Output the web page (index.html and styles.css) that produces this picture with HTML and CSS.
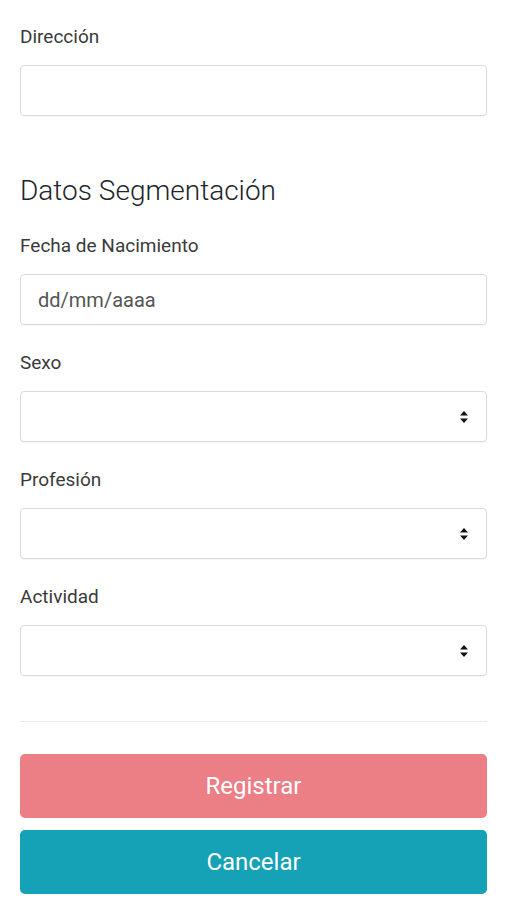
FILE: index.html
```html
<!DOCTYPE html>
<html lang="es">
<head>
<meta charset="utf-8">
<title>Registro</title>
<meta name="viewport" content="width=device-width, initial-scale=1.0">
<link rel="stylesheet" href="styles.css">
</head>
<body>

<form class="form">
  <div class="group first">
    <label for="direccion">Dirección</label>
    <input id="direccion" type="text" class="control">
  </div>

  <h2 class="section-title">Datos Segmentación</h2>

  <div class="group">
    <label for="nacimiento">Fecha de Nacimiento</label>
    <input id="nacimiento" type="text" class="control" placeholder="dd/mm/aaaa">
  </div>

  <div class="group">
    <label for="sexo">Sexo</label>
    <div class="select-wrap">
      <select id="sexo" class="control"><option></option></select>
      <svg class="caret" width="10" height="12" viewBox="0 0 10 12"><path d="M5 0 9 4.5H1Z M5 12 9 7.5H1Z" fill="#111"/></svg>
    </div>
  </div>

  <div class="group">
    <label for="profesion">Profesión</label>
    <div class="select-wrap">
      <select id="profesion" class="control"><option></option></select>
      <svg class="caret" width="10" height="12" viewBox="0 0 10 12"><path d="M5 0 9 4.5H1Z M5 12 9 7.5H1Z" fill="#111"/></svg>
    </div>
  </div>

  <div class="group">
    <label for="actividad">Actividad</label>
    <div class="select-wrap">
      <select id="actividad" class="control"><option></option></select>
      <svg class="caret" width="10" height="12" viewBox="0 0 10 12"><path d="M5 0 9 4.5H1Z M5 12 9 7.5H1Z" fill="#111"/></svg>
    </div>
  </div>

  <hr class="divider">

  <div class="actions">
    <button type="submit" class="btn btn-register">Registrar</button>
    <button type="button" class="btn btn-cancel">Cancelar</button>
  </div>
</form>

</body>
</html>
```

FILE: styles.css
```css
body {
  font-family: Roboto, "Noto Sans", Arial, sans-serif;
  background-color: #ffffff;
  color: #212529;
  margin: 0;
  padding: 25px 19px 0 20px;
}
.form {
  display: flex;
  flex-direction: column;
}
.group {
  margin-top: 26px;
}
.group.first {
  margin-top: 0;
}
.group label {
  display: block;
  font-size: 19px;
  line-height: 24px;
  color: #3a3a3a;
  margin-bottom: 16px;
}
.control {
  display: block;
  box-sizing: border-box;
  width: 100%;
  height: 51px;
  padding: 0 17px;
  font-family: inherit;
  font-size: 20px;
  color: #495057;
  background-color: #fff;
  border: 1px solid #dadada;
  border-radius: 4px;
  box-shadow: 0 1px 1px rgba(0, 0, 0, 0.04);
  outline: none;
}
.control::placeholder {
  color: #555;
}
select.control {
  appearance: none;
  -webkit-appearance: none;
}
.select-wrap {
  position: relative;
}
.caret {
  position: absolute;
  right: 18px;
  top: 20px;
  pointer-events: none;
}
.section-title {
  font-size: 28px;
  font-weight: 300;
  line-height: 36px;
  margin: 57px 0 0;
  color: #212529;
}
.section-title + .group {
  margin-top: 25px;
}
.divider {
  border: 0;
  border-top: 1px solid #e9e9e9;
  margin: 45px 0 32px;
}
.actions {
  display: flex;
  flex-direction: column;
  gap: 12px;
}
.btn {
  height: 64px;
  border: 0;
  border-radius: 5px;
  color: #fff;
  font-family: inherit;
  font-size: 24px;
  cursor: pointer;
}
.btn-register {
  background-color: #ec7e86;
}
.btn-cancel {
  background-color: #15a1b6;
}
```
